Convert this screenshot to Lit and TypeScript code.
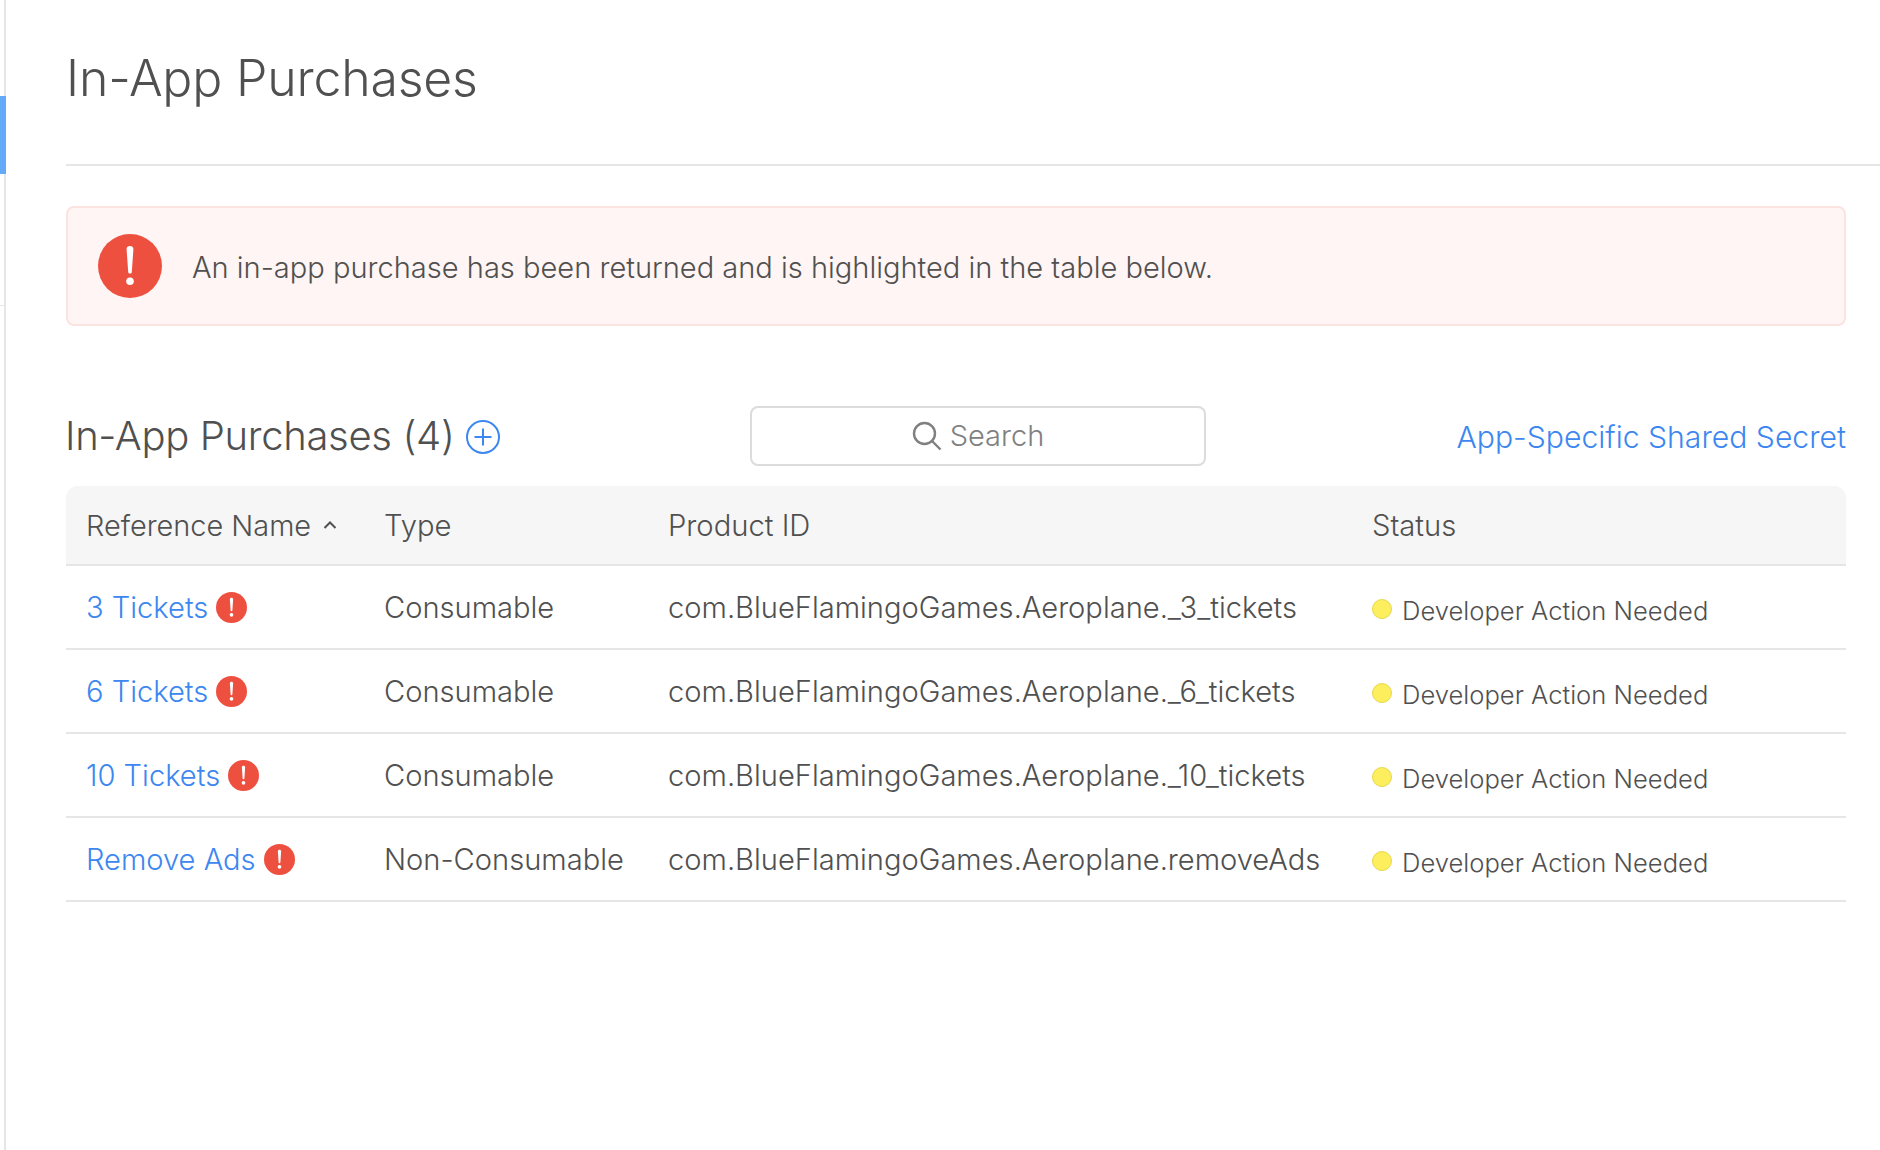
import { LitElement, html, css, svg } from "lit";
import { customElement } from "lit/decorators.js";

const rows = [
  ["3 Tickets", "Consumable", "com.BlueFlamingoGames.Aeroplane._3_tickets"],
  ["6 Tickets", "Consumable", "com.BlueFlamingoGames.Aeroplane._6_tickets"],
  ["10 Tickets", "Consumable", "com.BlueFlamingoGames.Aeroplane._10_tickets"],
  ["Remove Ads", "Non-Consumable", "com.BlueFlamingoGames.Aeroplane.removeAds"],
];

const alertIcon = svg`<circle cx="16" cy="16" r="16" fill="#ee5040"/><path d="M14.3 7.6c0-1 .7-1.6 1.7-1.6s1.7.6 1.7 1.6L16.9 19c0 .5-.4.8-.9.8s-.9-.3-.9-.8z" fill="#fff"/><circle cx="16" cy="23.6" r="1.9" fill="#fff"/>`;

@customElement("app-root")
export class AppRoot extends LitElement {
  static styles = css`
    :host { display: flex; width: 1880px; height: 1150px; overflow: hidden; background: #fff; color: #505050;
      font-family: Inter, "Liberation Sans", sans-serif; font-weight: 300; }
    .rail { width: 4px; border-right: 2px solid #e6e6e6; flex: none; display: flex; flex-direction: column; }
    .rail .gap { height: 96px; flex: none; }
    .rail .active { height: 78px; width: 6px; background: #64aaf8; flex: none; }
    .rail .item { height: 131px; border-bottom: 1px solid #e6e6e6; flex: none; }
    main { flex: 1; min-width: 0; padding-left: 60px; }
    h1 { margin: 0; height: 166px; box-sizing: border-box; padding-top: 46px; font-size: 50px; line-height: 64px; font-weight: 300;
      border-bottom: 2px solid #e6e6e6; letter-spacing: -0.2px; }
    .content { width: 1780px; padding-top: 40px; }
    .alert { height: 120px; box-sizing: border-box; border: 2px solid #fbe4e0; border-radius: 8px; background: #fef5f4;
      display: flex; align-items: center; padding-left: 30px; gap: 30px; font-size: 29.05px; }
    .alert span { margin-top: 2px; }
    .alert svg { width: 64px; height: 64px; flex: none; }
    .bar { display: grid; grid-template-columns: 684px 456px 1fr; align-items: center; height: 60px; margin-top: 80px; }
    h2 { margin: 0 0 0 -1px; font-size: 40px; font-weight: 300; line-height: 60px; display: flex; align-items: center; gap: 11px; letter-spacing: -0.33px; }
    h2 svg { width: 34px; height: 34px; margin-top: 2px; }
    .search { height: 60px; box-sizing: border-box; border: 2px solid #dcdcdc; border-radius: 8px; display: flex;
      align-items: center; justify-content: center; gap: 8px; color: #808080; font-size: 29px; padding-bottom: 1px; }
    .search svg { width: 30px; height: 30px; }
    .secret { justify-self: end; color: #3d87f0; font-size: 30.15px; font-weight: 300; margin-top: 2px; }
    .table { margin-top: 20px; }
    .row { display: grid; grid-template-columns: 298px 284px 704px 1fr; align-items: center; height: 84px; box-sizing: border-box;
      border-bottom: 2px solid #e6e6e6; padding-left: 20px; font-size: 29.1px; }
    .head { height: 80px; background: #f6f6f6; border-radius: 12px 12px 0 0; font-size: 29.2px; }
    .sort { display: inline-flex; align-items: center; gap: 12px; font-size: 28.9px; }
    .sort svg { width: 14px; height: 10px; }
    .name { display: flex; align-items: center; gap: 8px; color: #3d87f0; }
    .name svg { width: 31px; height: 31px; flex: none; }
    .status { display: flex; align-items: center; gap: 10px; font-size: 25.6px; margin-top: 6px; }
    .dot { width: 20px; height: 20px; box-sizing: border-box; border-radius: 50%; background: #fcee5c; border: 1px solid #e6d84e; flex: none; margin-top: -2px; }
  `;

  render() {
    return html`
      <div class="rail"><div class="gap"></div><div class="active"></div><div class="item"></div></div>
      <main>
        <h1>In-App Purchases</h1>
        <div class="content">
          <div class="alert">
            <svg viewBox="0 0 32 32">${alertIcon}</svg>
            <span>An in-app purchase has been returned and is highlighted in the table below.</span>
          </div>
          <div class="bar">
            <h2>In-App Purchases (4)
              <svg viewBox="0 0 34 34" fill="none" stroke="#3d87f0" stroke-width="2"><circle cx="17" cy="17" r="16"/><path d="M17 8.5v17M8.5 17h17"/></svg>
            </h2>
            <div class="search">
              <svg viewBox="0 0 30 30" fill="none" stroke="#808080" stroke-width="2.4"><circle cx="12.5" cy="12.5" r="10.5"/><path d="M20 20l8.5 8.5"/></svg>
              <span>Search</span>
            </div>
            <div class="secret">App-Specific Shared Secret</div>
          </div>
          <div class="table">
            <div class="row head">
              <span class="sort">Reference Name <svg viewBox="0 0 14 10" fill="none" stroke="#505050" stroke-width="2"><path d="M1.5 8L7 2.5 12.5 8"/></svg></span>
              <span>Type</span><span>Product ID</span><span>Status</span>
            </div>
            ${rows.map(
              ([n, t, p]) => html`<div class="row">
                <span class="name">${n}<svg viewBox="0 0 32 32">${alertIcon}</svg></span>
                <span>${t}</span><span>${p}</span>
                <span class="status"><i class="dot"></i>Developer Action Needed</span>
              </div>`
            )}
          </div>
        </div>
      </main>
    `;
  }
}
